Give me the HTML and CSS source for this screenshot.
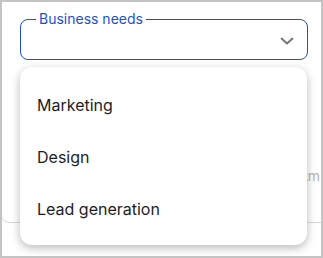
FILE: index.html
```html
<!DOCTYPE html>
<html lang="en">

<head>
    <meta charset="UTF-8" />
    <title>Business needs</title>
    <link rel="stylesheet" href="styles.css">
</head>

<body>
    <div class="frame">
        <div class="sheet">
            <fieldset class="field">
                <legend>Business needs</legend>
                <svg class="chevron" width="14" height="8" viewBox="0 0 14 8">
                    <path d="M1.5 1.5 L7 6.5 L12.5 1.5" fill="none" stroke="#6f6f74" stroke-width="1.8" stroke-linecap="round" stroke-linejoin="round" />
                </svg>
            </fieldset>
            <div class="hint">atm</div>
        </div>

        <!-- dropdown menu -->
        <ul class="menu">
            <li>Marketing</li>
            <li>Design</li>
            <li>Lead generation</li>
        </ul>
    </div>
</body>

</html>
```

FILE: styles.css
```css
* {
    margin: 0;
    padding: 0;
    box-sizing: border-box;
}

body {
    font-family: "Inter", "Liberation Sans", sans-serif;
    background-color: #fff;
    color: #1d1d1f;
}

.frame {
    position: relative;
    width: 323px;
    height: 258px;
    border: 2px solid #c3c3c3;
    overflow: hidden;
}

.sheet {
    height: 221px;
    padding: 8px 12px 0 18px;
    border-left: 1px solid #e2e2e2;
    border-bottom: 1px solid #d8d8d8;
    border-bottom-left-radius: 8px;
    margin-left: -1px;
}

.field {
    position: relative;
    width: 288px;
    height: 50px;
    border: 1px solid #1a4fd6;
    border-radius: 8px;
    padding: 0 14px;
}

.field legend {
    font-size: 14px;
    color: #1a4fd6;
    padding: 0 3px;
    margin-left: 1px;
    line-height: 18px;
}

.chevron {
    position: absolute;
    right: 13px;
    top: 9px;
}

.hint {
    margin-top: 107px;
    margin-right: -11px;
    text-align: right;
    font-size: 14px;
    color: #b4b4b4;
    white-space: nowrap;
}

.menu {
    position: absolute;
    left: 18px;
    top: 65px;
    width: 287px;
    list-style: none;
    background-color: #fff;
    border-radius: 12px;
    padding: 12px 0 10px;
    box-shadow: 0 3px 10px rgba(0, 0, 0, 0.28);
}

.menu li {
    height: 52px;
    line-height: 52px;
    padding-left: 17px;
    font-size: 16px;
    color: #1d1d1f;
}
```
